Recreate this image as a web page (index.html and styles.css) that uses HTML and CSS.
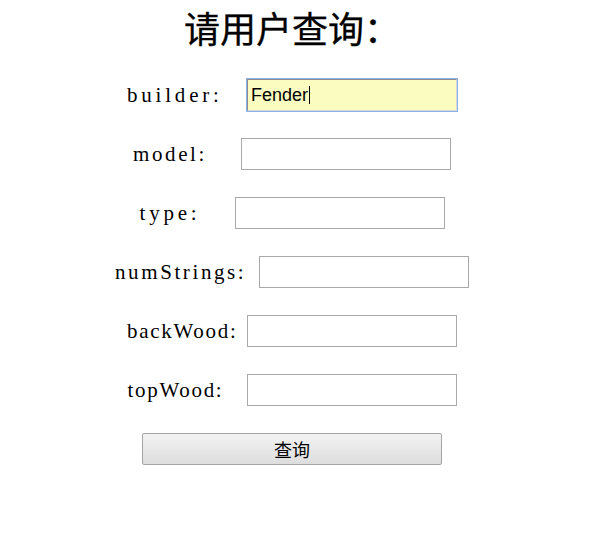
FILE: index.html
```html
<!DOCTYPE html>
<html>
<head>
<meta charset="utf-8">
<title>查询</title>
<link rel="stylesheet" href="styles.css">
</head>
<body>
<div class="page">
  <h1 class="title">请用户查询：</h1>
  <form class="form">
    <div class="row"><span class="label w120 loose">builder:</span><span class="field-wrap"><input class="field field-focus" type="text" value="Fender"><span class="caret"></span></span></div>
    <div class="row"><span class="label w108">model:</span><input class="field" type="text"></div>
    <div class="row"><span class="label w95 loose">type:</span><input class="field" type="text"></div>
    <div class="row"><span class="label w144">numStrings:</span><input class="field" type="text"></div>
    <div class="row"><span class="label w120 tight">backWood:</span><input class="field" type="text"></div>
    <div class="row"><span class="label w119 tight">topWood:</span><input class="field" type="text"></div>
    <div class="row"><button class="btn" type="button">查询</button></div>
  </form>
</div>
</body>
</html>
```
FILE: styles.css
```css
html, body {
  margin: 0;
  padding: 0;
  background: #ffffff;
}
body {
  padding: 8px;
}
.page {
  width: 568px;
  text-align: center;
}
.title {
  margin: 0;
  height: 38px;
  line-height: 38px;
  font-family: "Noto Sans CJK SC", sans-serif;
  font-size: 36px;
  font-weight: normal;
  color: #000;
  -webkit-text-stroke: 0.3px #000;
}
.form {
  margin: 0;
  padding-top: 33px;
  display: flex;
  flex-direction: column;
  gap: 27px;
}
.row {
  display: flex;
  justify-content: center;
  align-items: center;
  height: 32px;
}
.label {
  white-space: pre;
  text-align: left;
  font-family: "Liberation Serif", "DejaVu Serif", serif;
  font-size: 21px;
  letter-spacing: 2.6px;
  color: #000;
}
.loose { letter-spacing: 3.8px; }
.tight { letter-spacing: 1.7px; }
.w95 { width: 95px; }
.w108 { width: 108px; }
.w119 { width: 119px; }
.w120 { width: 120px; }
.w144 { width: 144px; }
.field-wrap {
  position: relative;
  display: block;
  width: 210px;
  height: 32px;
}
.field {
  box-sizing: border-box;
  display: block;
  width: 210px;
  height: 32px;
  margin: 0;
  padding: 0 3px;
  border: 1px solid #a9a9a9;
  background: #fff;
  font-family: "Liberation Sans", Arial, sans-serif;
  font-size: 18px;
  color: #000;
  outline: none;
}
.field-focus {
  background: #fafcc0;
  box-shadow: 0 0 0 1px #8fb1ea;
  border-color: #8c8c8c #d8d8d8 #d8d8d8 #8c8c8c;
}
.caret {
  position: absolute;
  left: 62px;
  top: 7px;
  width: 1px;
  height: 18px;
  background: #000;
}
.btn {
  box-sizing: border-box;
  width: 300px;
  height: 32px;
  margin: 0;
  padding: 0;
  border: 1px solid #a3a3a3;
  border-radius: 2px;
  background: linear-gradient(#f3f3f3, #dddddd);
  font-family: "Noto Sans CJK SC", sans-serif;
  font-size: 18px;
  color: #000;
}
```
